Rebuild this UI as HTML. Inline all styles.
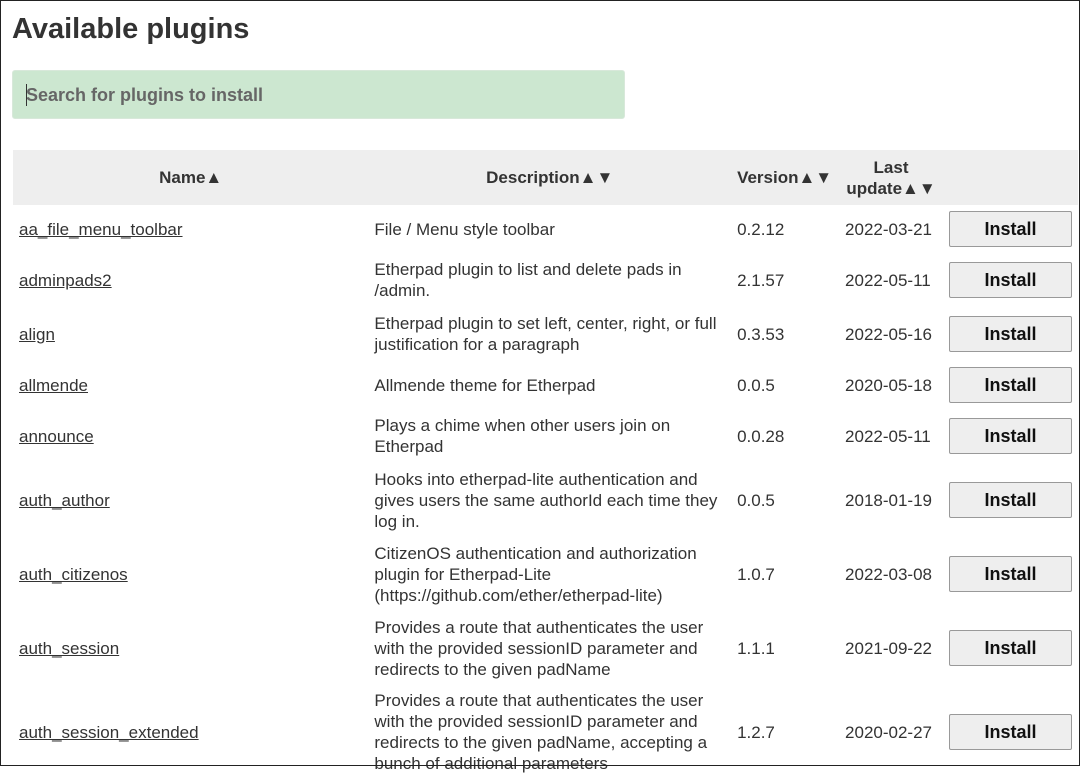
<!DOCTYPE html>
<html><head><meta charset="utf-8"><style>
html,body{margin:0;padding:0}
body{width:1080px;height:766px;overflow:hidden;position:relative;background:#fff;font-family:"Liberation Sans",Arial,sans-serif;color:#333;}
.frame{position:absolute;left:0;top:0;width:1078px;height:764px;border:1px solid #222;pointer-events:none;z-index:5}
h1{position:absolute;left:12px;top:13px;margin:0;font-size:29px;font-weight:bold;color:#333}
.search{position:absolute;left:12px;top:70px;width:613px;height:49px;background:#cce7d0;border:1px solid #d8e8da;border-radius:3px;box-sizing:border-box;font-size:18px;font-weight:bold;color:#666;line-height:48px;padding-left:13px}
.search i{position:absolute;left:13px;top:13px;width:1px;height:22px;background:#333}
table{position:absolute;left:13px;top:150px;border-collapse:collapse;width:1065px;font-size:17px}
th{background:#eee;height:55px;font-weight:bold;color:#333;padding:0;font-size:17px;line-height:21px}
td{padding:0 6px;vertical-align:middle;line-height:21px;color:#333}
td a{color:#333;text-decoration:underline}
button{width:123px;height:36px;background:#eee;border:1px solid #999;border-radius:2px;font:bold 18px "Liberation Sans",Arial,sans-serif;color:#111;padding:0}
</style></head><body>
<div class="frame"></div>
<h1>Available plugins</h1>
<div class="search"><i></i>Search for plugins to install</div>
<table>
<colgroup><col style="width:356px"><col style="width:363px"><col style="width:108px"><col style="width:104px"><col></colgroup>
<tr><th>Name▲</th><th>Description▲▼</th><th style="text-align:left;padding-left:6px">Version▲▼</th><th>Last<br>update▲▼</th><th></th></tr>
<tr style="height:48px"><td><a>aa_file_menu_toolbar</a></td><td>File / Menu style toolbar</td><td>0.2.12</td><td>2022-03-21</td><td><button>Install</button></td></tr>
<tr style="height:54px"><td><a>adminpads2</a></td><td>Etherpad plugin to list and delete pads in<br>/admin.</td><td>2.1.57</td><td>2022-05-11</td><td><button>Install</button></td></tr>
<tr style="height:54px"><td><a>align</a></td><td>Etherpad plugin to set left, center, right, or full<br>justification for a paragraph</td><td>0.3.53</td><td>2022-05-16</td><td><button>Install</button></td></tr>
<tr style="height:48px"><td><a>allmende</a></td><td>Allmende theme for Etherpad</td><td>0.0.5</td><td>2020-05-18</td><td><button>Install</button></td></tr>
<tr style="height:54px"><td><a>announce</a></td><td>Plays a chime when other users join on<br>Etherpad</td><td>0.0.28</td><td>2022-05-11</td><td><button>Install</button></td></tr>
<tr style="height:74px"><td><a>auth_author</a></td><td>Hooks into etherpad-lite authentication and<br>gives users the same authorId each time they<br>log in.</td><td>0.0.5</td><td>2018-01-19</td><td><button>Install</button></td></tr>
<tr style="height:74px"><td><a>auth_citizenos</a></td><td>CitizenOS authentication and authorization<br>plugin for Etherpad-Lite<br>(https://github.com/ether/etherpad-lite)</td><td>1.0.7</td><td>2022-03-08</td><td><button>Install</button></td></tr>
<tr style="height:74px"><td><a>auth_session</a></td><td>Provides a route that authenticates the user<br>with the provided sessionID parameter and<br>redirects to the given padName</td><td>1.1.1</td><td>2021-09-22</td><td><button>Install</button></td></tr>
<tr style="height:94px"><td><a>auth_session_extended</a></td><td>Provides a route that authenticates the user<br>with the provided sessionID parameter and<br>redirects to the given padName, accepting a<br>bunch of additional parameters</td><td>1.2.7</td><td>2020-02-27</td><td><button>Install</button></td></tr>
</table>
</body></html>
